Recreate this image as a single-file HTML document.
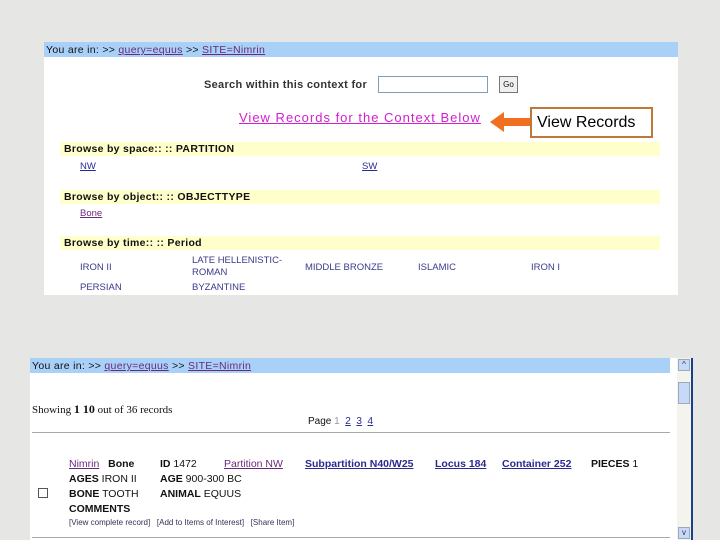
<!DOCTYPE html>
<html><head><meta charset="utf-8"><style>
*{margin:0;padding:0;box-sizing:border-box}
body{width:720px;height:540px;overflow:hidden;background:#e6e6e4;font-family:"Liberation Sans",sans-serif;position:relative;font-size:9px;color:#111}
.a{position:absolute;white-space:nowrap}
.p{background:#fff}
.bar{background:#a9d0f7}
.y{background:#ffffcc}
a,.l{color:#2a2a90;text-decoration:underline}
.v{color:#6a2a7a;text-decoration:underline}
b{font-weight:bold}
.n{color:#3a3a8a;font-size:9.5px}
.h{font-weight:bold;font-size:10.5px;letter-spacing:0.3px}
</style></head><body>
<div class="a p" style="left:44px;top:42px;width:634px;height:253px"></div>
<div class="a bar" style="left:44px;top:42px;width:634px;height:15px"></div>
<div class="a" style="left:46px;top:44px;font-size:10.5px;letter-spacing:0.3px">You are in: &gt;&gt; <span class="v">query=equus</span> &gt;&gt; <span class="v">SITE=Nimrin</span></div>
<div class="a" style="left:204px;top:79px;font-size:11px;font-weight:bold;color:#333;letter-spacing:0.3px">Search within this context for</div>
<div class="a" style="left:378px;top:76px;width:110px;height:17px;border:1px solid #7f9db9;background:#fff"></div>
<div class="a" style="left:499px;top:76px;width:19px;height:17px;border:1px solid #777;background:#f0f0f0;font-size:8px;text-align:center;line-height:15px">Go</div>
<div class="a" style="left:239px;top:110px;font-size:13px;color:#d020d0;text-decoration:underline;letter-spacing:1px">View Records for the Context Below</div>
<svg class="a" style="left:488px;top:110px" width="44" height="24"><polygon points="2,12 16,2 16,8 42,8 42,16 16,16 16,22" fill="#f07020"/></svg>
<div class="a" style="left:530px;top:107px;width:123px;height:31px;border:2px solid #c07838;background:#fff;font-size:16px;line-height:27px;padding-left:5px;color:#000">View Records</div>
<div class="a y" style="left:60px;top:142px;width:600px;height:14px"></div>
<div class="a h" style="left:64px;top:143px">Browse by space:: :: PARTITION</div>
<div class="a l" style="left:80px;top:161px;font-size:9.5px">NW</div>
<div class="a l" style="left:362px;top:161px;font-size:9.5px">SW</div>
<div class="a y" style="left:60px;top:190px;width:600px;height:14px"></div>
<div class="a h" style="left:64px;top:191px">Browse by object:: :: OBJECTTYPE</div>
<div class="a v" style="left:80px;top:208px;font-size:9.5px">Bone</div>
<div class="a y" style="left:60px;top:236px;width:600px;height:14px"></div>
<div class="a h" style="left:64px;top:237px">Browse by time:: :: Period</div>
<div class="a n" style="left:80px;top:262px">IRON II</div>
<div class="a n" style="left:192px;top:255px;line-height:12px">LATE HELLENISTIC-<br>ROMAN</div>
<div class="a n" style="left:305px;top:262px">MIDDLE BRONZE</div>
<div class="a n" style="left:418px;top:262px">ISLAMIC</div>
<div class="a n" style="left:531px;top:262px">IRON I</div>
<div class="a n" style="left:80px;top:282px">PERSIAN</div>
<div class="a n" style="left:192px;top:282px">BYZANTINE</div>

<div class="a p" style="left:30px;top:358px;width:662px;height:182px"></div>
<div class="a bar" style="left:30px;top:358px;width:640px;height:15px"></div>
<div class="a" style="left:32px;top:360px;font-size:10.5px;letter-spacing:0.3px">You are in: &gt;&gt; <span class="v">query=equus</span> &gt;&gt; <span class="v">SITE=Nimrin</span></div>
<div class="a" style="left:32px;top:402px;font-family:'Liberation Serif',serif;font-size:11px">Showing <b style="font-size:12px">1 10</b> out of 36 records</div>
<div class="a" style="left:308px;top:416px;font-size:10px">Page <span style="color:#999">1</span> &nbsp;<a>2</a> &nbsp;<a>3</a> &nbsp;<a>4</a></div>
<div class="a" style="left:32px;top:432px;width:638px;height:1px;background:#aaa"></div>
<div class="a" style="left:69px;top:458px;font-size:10.5px"><span class="v">Nimrin</span>&nbsp;&nbsp; <b>Bone</b></div>
<div class="a" style="left:160px;top:458px;font-size:10.5px"><b>ID</b> 1472</div>
<div class="a v" style="left:224px;top:458px;font-size:10.5px">Partition NW</div>
<div class="a l" style="left:305px;top:458px;font-size:10.5px;font-weight:bold">Subpartition N40/W25</div>
<div class="a l" style="left:435px;top:458px;font-size:10.5px;font-weight:bold">Locus 184</div>
<div class="a l" style="left:502px;top:458px;font-size:10.5px;font-weight:bold">Container 252</div>
<div class="a" style="left:591px;top:458px;font-size:10.5px"><b>PIECES</b> 1</div>
<div class="a" style="left:69px;top:473px;font-size:10.5px"><b>AGES</b> IRON II</div>
<div class="a" style="left:160px;top:473px;font-size:10.5px"><b>AGE</b> 900-300 BC</div>
<div class="a" style="left:38px;top:488px;width:10px;height:10px;border:1px solid #555;background:#fff"></div>
<div class="a" style="left:69px;top:488px;font-size:10.5px"><b>BONE</b> TOOTH</div>
<div class="a" style="left:160px;top:488px;font-size:10.5px"><b>ANIMAL</b> EQUUS</div>
<div class="a" style="left:69px;top:503px;font-size:10.5px;font-weight:bold">COMMENTS</div>
<div class="a" style="left:69px;top:518px;font-size:8px;color:#335">[View complete record] &nbsp; [Add to Items of Interest] &nbsp; [Share Item]</div>
<div class="a" style="left:32px;top:537px;width:638px;height:1px;background:#aaa"></div>
<div class="a" style="left:677px;top:358px;width:14px;height:182px;background:#f4f3ee"></div>
<div class="a" style="left:678px;top:359px;width:12px;height:12px;background:#c8d8f8;border:1px solid #9ab;font-size:8px;text-align:center;line-height:10px;color:#335">^</div>
<div class="a" style="left:678px;top:382px;width:12px;height:22px;background:#c8d8f8;border:1px solid #9ab"></div>
<div class="a" style="left:678px;top:527px;width:12px;height:12px;background:#c8d8f8;border:1px solid #9ab;font-size:8px;text-align:center;line-height:10px;color:#335">v</div>
<div class="a" style="left:691px;top:358px;width:2px;height:182px;background:#1a3f8a"></div>
</body></html>
